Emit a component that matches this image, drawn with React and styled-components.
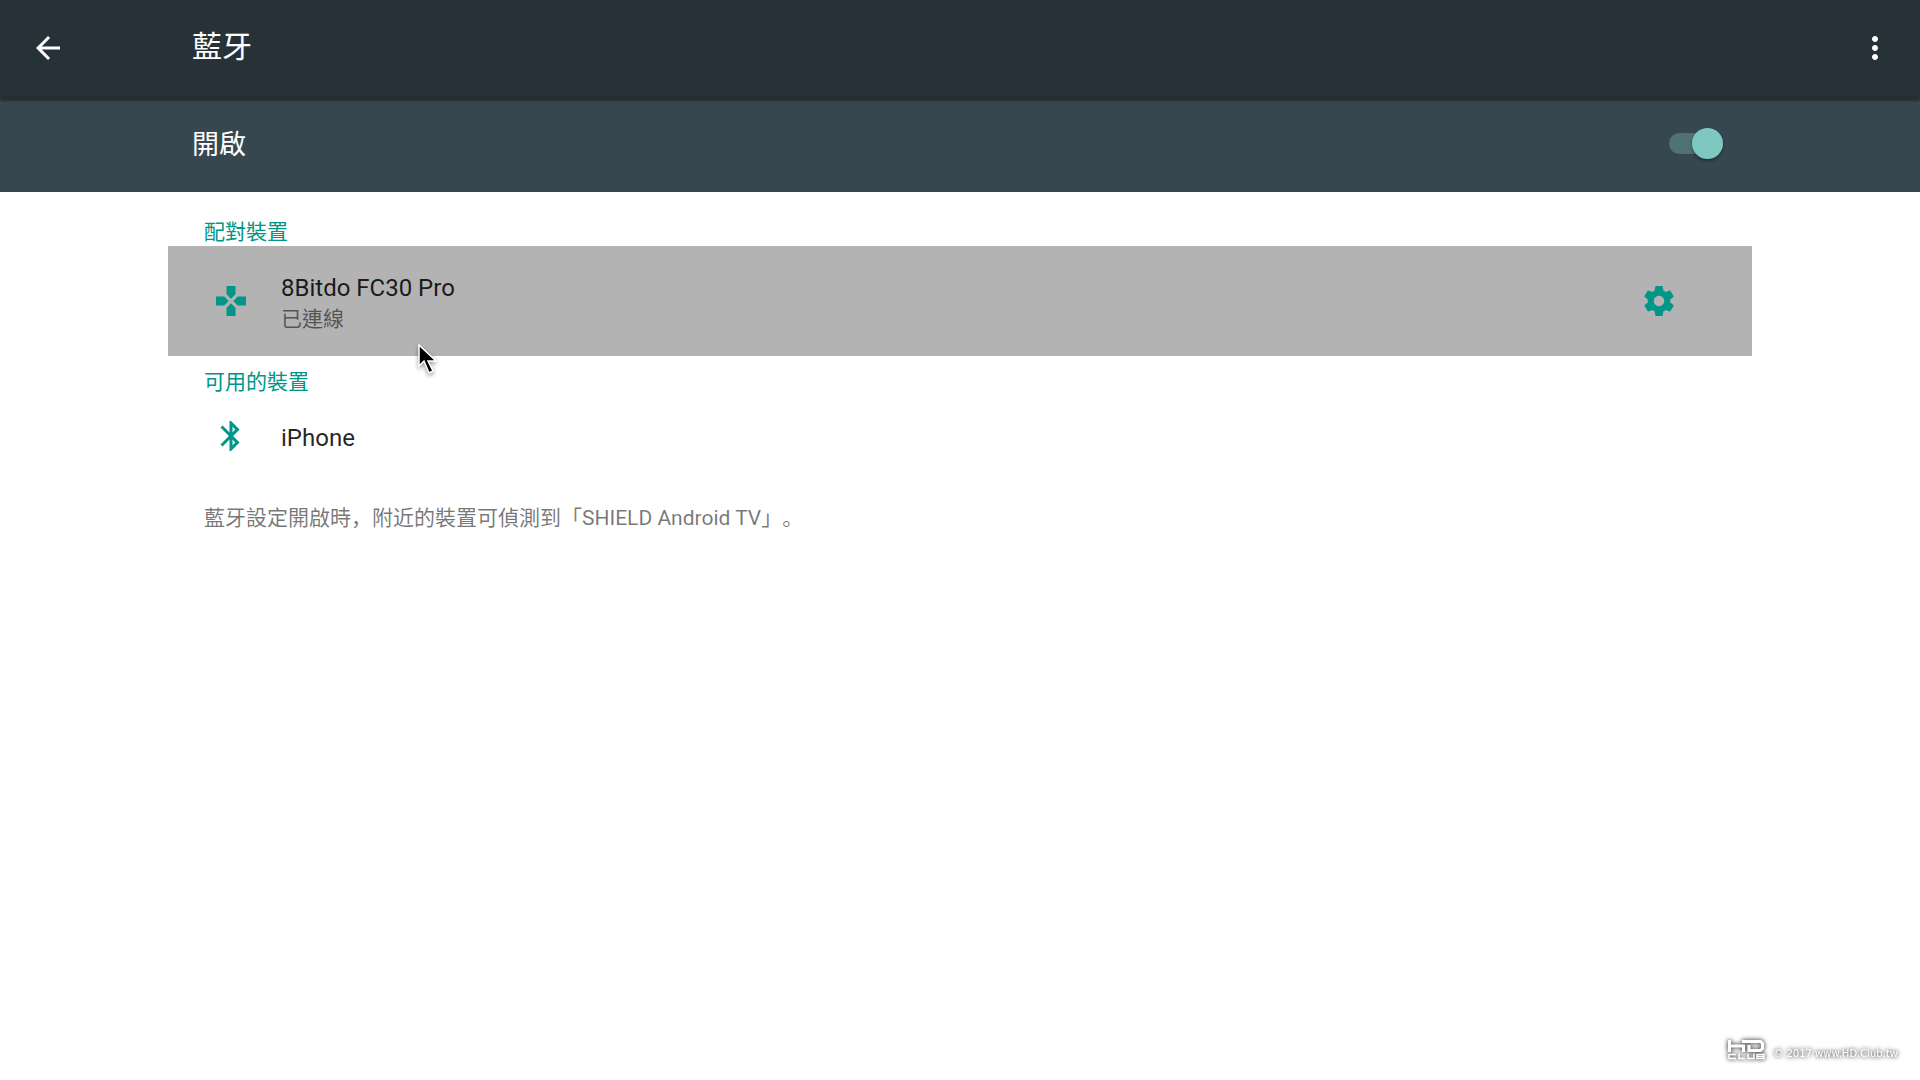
import styled, { createGlobalStyle } from 'styled-components'

const colors = {
  appBar: '#263238',
  appBarShadow: '#242e33',
  switchBar: '#37474f',
  accent: '#009688',
  thumb: '#7fc7c1',
  track: '#507274',
  focused: '#b3b3b3',
  white: '#ffffff',
}

const GlobalStyle = createGlobalStyle`
  * {
    box-sizing: border-box;
  }

  body {
    margin: 0;
    background-color: ${colors.white};
    font-family: Roboto, 'Noto Sans CJK TC', sans-serif;
  }
`

const Page = styled.div`
  min-height: 100vh;
  display: flex;
  flex-direction: column;
`

const AppBar = styled.header`
  position: relative;
  height: 96px;
  padding: 0 27px 0 30px;
  display: flex;
  align-items: center;
  color: ${colors.white};
  background-color: ${colors.appBar};
  box-shadow: 0 5px 2px ${colors.appBarShadow};
`

const IconButton = styled.button`
  border: 0;
  padding: 0;
  background: none;
  color: inherit;
  display: flex;
  cursor: pointer;
`

const Title = styled.h1`
  margin: 0 auto 0 126px;
  padding-bottom: 2px;
  font-size: 30px;
  font-weight: 400;
  line-height: 36px;
`

const SwitchBar = styled.label`
  height: 96px;
  padding: 0 192px;
  display: flex;
  align-items: center;
  justify-content: space-between;
  color: ${colors.white};
  background-color: ${colors.switchBar};
  font-size: 27px;
  line-height: 36px;
`

const SwitchText = styled.span`
  padding-top: 2px;
`

const Switch = styled.input`
  appearance: none;
  width: 54px;
  height: 21px;
  margin: 0 5px 2px;
  display: flex;
  align-items: center;
  justify-content: flex-end;
  border-radius: 12px;
  background-color: ${colors.track};
  cursor: pointer;

  &::before {
    content: '';
    width: 31px;
    height: 31px;
    border-radius: 50%;
    background-color: ${colors.thumb};
    box-shadow: 0 2px 3px rgba(0, 0, 0, 0.35);
  }

  &:not(:checked) {
    justify-content: flex-start;
  }
`

const Content = styled.main`
  padding: 14px 168px;
`

const SectionTitle = styled.h2`
  margin: 0;
  padding: 11px 36px 0;
  height: 40px;
  color: ${colors.accent};
  font-size: 21px;
  font-weight: 400;
  line-height: 30px;
`

const DeviceList = styled.ul`
  margin: 0;
  padding: 0;
  list-style: none;
`

const Device = styled.li`
  height: ${({ $focused }) => ($focused ? 110 : 80)}px;
  padding: 0 75px 0 45px;
  display: flex;
  align-items: center;
  color: ${colors.accent};
  background-color: ${({ $focused }) => ($focused ? colors.focused : 'transparent')};
`

const DeviceText = styled.div`
  margin: 0 auto 0 32px;
  padding-top: 3px;
`

const DeviceName = styled.p`
  margin: 0;
  color: rgba(0, 0, 0, 0.87);
  font-size: 24px;
  line-height: 32px;
`

const DeviceStatus = styled.p`
  margin: 0;
  color: rgba(0, 0, 0, 0.54);
  font-size: 21px;
  line-height: 30px;
`

const Note = styled.p`
  margin: 0;
  padding: 27px 36px;
  color: rgba(0, 0, 0, 0.54);
  font-family: Roboto, 'Noto Sans CJK SC', sans-serif;
  font-size: 21px;
  line-height: 30px;
  text-spacing-trim: space-all;
`

const Pointer = styled.svg`
  position: absolute;
  left: 418px;
  top: 343px;
  overflow: visible;
  filter: drop-shadow(0 2px 2px rgba(0, 0, 0, 0.4));
`

const Watermark = styled.footer`
  margin: auto 22px 20px auto;
  display: flex;
  align-items: flex-end;
  gap: 8px;
  color: ${colors.white};
  font-family: 'DejaVu Sans', sans-serif;
  font-size: 10px;
  line-height: 12px;
  filter: drop-shadow(0 0 2px rgba(0, 0, 0, 0.6)) drop-shadow(0 0 2px rgba(0, 0, 0, 0.4));
`

const Icon = ({ path }) => (
  <svg width="36" height="36" viewBox="0 0 24 24" fill="currentColor" aria-hidden="true">
    <path d={path} />
  </svg>
)

const icons = {
  back: 'M20 11H7.83l5.59-5.59L12 4l-8 8 8 8 1.41-1.41L7.83 13H20v-2z',
  more: 'M12 8c1.1 0 2-.9 2-2s-.9-2-2-2-2 .9-2 2 .9 2 2 2zm0 2c-1.1 0-2 .9-2 2s.9 2 2 2 2-.9 2-2-.9-2-2-2zm0 6c-1.1 0-2 .9-2 2s.9 2 2 2 2-.9 2-2-.9-2-2-2z',
  gamepad:
    'M15 7.5V2H9v5.5l3 3 3-3zM7.5 9H2v6h5.5l3-3-3-3zM9 16.5V22h6v-5.5l-3-3-3 3zM16.5 9l-3 3 3 3H22V9h-5.5z',
  bluetooth:
    'M17.71 7.71L12 2h-1v7.59L6.41 5 5 6.41 10.59 12 5 17.59 6.41 19 11 14.41V22h1l5.71-5.71-4.3-4.29 4.3-4.29zM13 5.83l1.88 1.88L13 9.59V5.83zm1.88 10.46L13 18.17v-3.76l1.88 1.88z',
  settings:
    'M19.43 12.98c.04-.32.07-.64.07-.98s-.03-.66-.07-.98l2.11-1.65c.19-.15.24-.42.12-.64l-2-3.46c-.12-.22-.39-.3-.61-.22l-2.49 1c-.52-.4-1.08-.73-1.69-.98l-.38-2.65C14.46 2.18 14.25 2 14 2h-4c-.25 0-.46.18-.49.42l-.38 2.65c-.61.25-1.17.59-1.69.98l-2.49-1c-.23-.09-.49 0-.61.22l-2 3.46c-.13.22-.07.49.12.64l2.11 1.65c-.04.32-.07.65-.07.98s.03.66.07.98l-2.11 1.65c-.19.15-.24.42-.12.64l2 3.46c.12.22.39.3.61.22l2.49-1c.52.4 1.08.73 1.69.98l.38 2.65c.03.24.24.42.49.42h4c.25 0 .46-.18.49-.42l.38-2.65c.61-.25 1.17-.59 1.69-.98l2.49 1c.23.09.49 0 .61-.22l2-3.46c.12-.22.07-.49-.12-.64l-2.11-1.65zM12 15.5c-1.93 0-3.5-1.57-3.5-3.5s1.57-3.5 3.5-3.5 3.5 1.57 3.5 3.5-1.57 3.5-3.5 3.5z',
}

const App = () => {
  return (
    <Page>
      <GlobalStyle />
      <AppBar>
        <IconButton type="button" aria-label="返回">
          <Icon path={icons.back} />
        </IconButton>
        <Title>藍牙</Title>
        <IconButton type="button" aria-label="更多選項">
          <Icon path={icons.more} />
        </IconButton>
      </AppBar>

      <SwitchBar>
        <SwitchText>開啟</SwitchText>
        <Switch type="checkbox" role="switch" defaultChecked />
      </SwitchBar>

      <Content>
        <SectionTitle>配對裝置</SectionTitle>
        <DeviceList>
          <Device $focused>
            <Icon path={icons.gamepad} />
            <DeviceText>
              <DeviceName>8Bitdo FC30 Pro</DeviceName>
              <DeviceStatus>已連線</DeviceStatus>
            </DeviceText>
            <IconButton type="button" aria-label="裝置設定">
              <Icon path={icons.settings} />
            </IconButton>
          </Device>
        </DeviceList>

        <SectionTitle>可用的裝置</SectionTitle>
        <DeviceList>
          <Device>
            <Icon path={icons.bluetooth} />
            <DeviceText>
              <DeviceName>iPhone</DeviceName>
            </DeviceText>
          </Device>
        </DeviceList>

        <Note>藍牙設定開啟時，附近的裝置可偵測到「SHIELD Android TV」。</Note>
      </Content>

      <Watermark>
        <svg width="37" height="20" viewBox="0 0 37 20" fill="none" aria-hidden="true">
          <g stroke="currentColor" strokeWidth="3">
            <path d="M1.5 0v12M1.5 6h14v6" />
            <path d="M14 1.5h18.5l2 2v5l-2 2H21V5" />
          </g>
          <path
            d="M8 14.5H1v4h7M11 13.5v5h6M20 13.5v5h6v-5M29 14.5h7v4h-7zM29 16.5h7"
            stroke="currentColor"
            strokeWidth="1.5"
          />
        </svg>
        © 2017 www.HD.Club.tw
      </Watermark>

      <Pointer width="20" height="32" viewBox="0 0 20 32" aria-hidden="true">
        <path
          d="M1 2v21l5-5 5 12 4-2-5-10h8z"
          fill="#000000"
          stroke="#ffffff"
          strokeWidth="1.5"
        />
      </Pointer>
    </Page>
  )
}

export default App
